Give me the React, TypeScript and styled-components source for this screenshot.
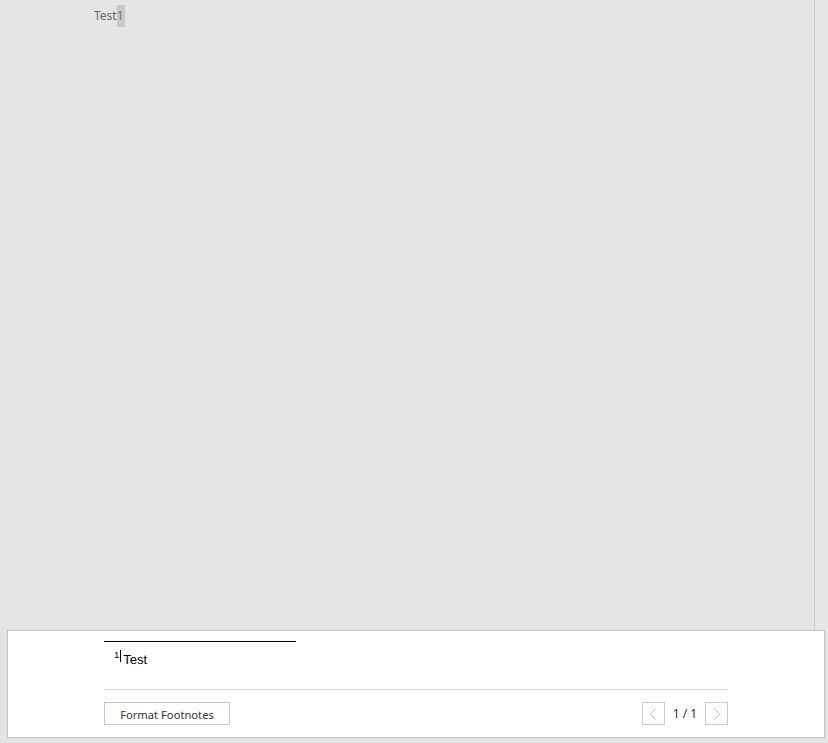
import React from "react";
import styled, { createGlobalStyle } from "styled-components";

const GlobalStyle = createGlobalStyle`
  html, body {
    margin: 0;
    padding: 0;
    background: #e4e4e4;
  }
  body {
    font-family: "Noto Sans", "Open Sans", sans-serif;
  }
`;

const Shell = styled.div`
  display: flex;
  flex-direction: column;
  width: 828px;
  height: 743px;
  background: #e4e4e4;
  overflow: hidden;
`;

const Workspace = styled.div`
  flex: 1;
  display: flex;
  min-height: 0;
`;

const DocArea = styled.div`
  flex: 1;
  padding: 5px 0 0 94px;
  border-right: 1px solid #c9c9c9;
`;

const ScrollTrack = styled.div`
  width: 13px;
  background: #e7e7e7;
`;

const DocLine = styled.div`
  font-size: 12px;
  line-height: 22px;
  color: #666;
  display: flex;
`;

const Marker = styled.span`
  background: #c8c8c8;
  color: #7a6f8a;
  padding: 0 1px 0 0;
`;

const FootnotePanel = styled.div`
  margin: 0 3px 5px 7px;
  height: 108px;
  box-sizing: border-box;
  background: #fff;
  border: 1px solid #c6c6c6;
  box-shadow: 0 0 1px rgba(0, 0, 0, 0.08);
  padding: 10px 0 0 96px;
  display: flex;
  flex-direction: column;
`;

const Content = styled.div`
  width: 624px;
  display: flex;
  flex-direction: column;
`;

const Rule = styled.div`
  width: 192px;
  height: 1px;
  background: #000;
`;

const NoteRow = styled.div`
  margin-top: 8px;
  padding-left: 10px;
  display: flex;
  align-items: flex-start;
  height: 17px;
  font-family: "Liberation Sans", Arial, sans-serif;
  font-size: 13px;
  line-height: 17px;
  color: #000;
`;

const NoteNum = styled.span`
  font-family: "Liberation Sans", Arial, sans-serif;
  font-size: 9.5px;
  line-height: 10px;
`;

const Caret = styled.span`
  width: 1px;
  height: 12px;
  background: #000;
  margin: 0 2px 0 1px;
`;

const NoteText = styled.span`
  margin-top: 1px;
`;

const Separator = styled.div`
  height: 1px;
  background: #cfcfcf;
  margin-top: 22px;
`;

const Footer = styled.div`
  margin-top: 12px;
  display: flex;
  align-items: center;
  justify-content: space-between;
`;

const Button = styled.button`
  height: 23px;
  width: 126px;
  padding: 2px 0 0;
  border: 1px solid #c8c8c8;
  background: #fff;
  color: #333;
  font-family: "Noto Sans", "Open Sans", sans-serif;
  font-size: 11.2px;
  line-height: 18px;
  box-sizing: border-box;
`;

const Pager = styled.div`
  display: flex;
  align-items: center;
`;

const PageButton = styled.button`
  width: 23px;
  height: 23px;
  padding: 0;
  box-sizing: border-box;
  border: 1px solid #cbcbcb;
  background: #fff;
  display: flex;
  align-items: center;
  justify-content: center;
`;

const PageLabel = styled.span`
  width: 40px;
  text-align: center;
  font-size: 12px;
  color: #333;
`;

const Chevron = ({ dir }: { dir: "left" | "right" }) => (
  <svg width="9" height="14" viewBox="0 0 9 14">
    <path
      d={dir === "left" ? "M6.5 1.5 L1.5 7 L6.5 12.5" : "M2.5 1.5 L7.5 7 L2.5 12.5"}
      fill="none"
      stroke="#bdbdbd"
      strokeWidth="1"
    />
  </svg>
);

export default function App() {
  return (
    <>
      <GlobalStyle />
      <Shell>
        <Workspace>
          <DocArea>
            <DocLine>
              Test<Marker>1</Marker>
            </DocLine>
          </DocArea>
          <ScrollTrack />
        </Workspace>
        <FootnotePanel>
          <Content>
            <Rule />
            <NoteRow>
              <NoteNum>1</NoteNum>
              <Caret />
              <NoteText>Test</NoteText>
            </NoteRow>
            <Separator />
            <Footer>
              <Button>Format Footnotes</Button>
              <Pager>
                <PageButton>
                  <Chevron dir="left" />
                </PageButton>
                <PageLabel>1 / 1</PageLabel>
                <PageButton>
                  <Chevron dir="right" />
                </PageButton>
              </Pager>
            </Footer>
          </Content>
        </FootnotePanel>
      </Shell>
    </>
  );
}
